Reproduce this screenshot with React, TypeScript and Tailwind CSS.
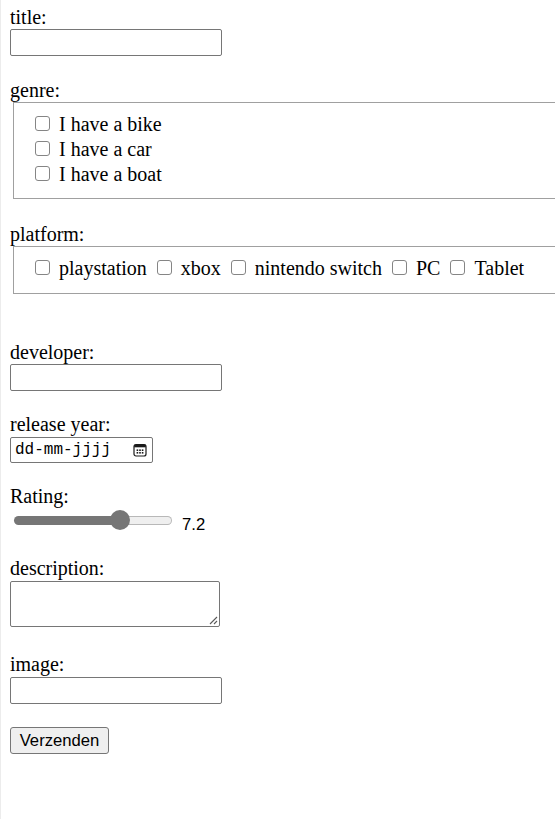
import React from "react";

const label = "h-[23px] leading-[23px] text-[20px] text-black font-['Liberation_Serif','Times_New_Roman',serif]";
const textInput = "w-[212px] h-[27px] border border-[#767676] rounded-[2px] bg-white";

function Box({ className = "" }: { className?: string }) {
  return (
    <span
      className={
        "inline-block w-[15px] h-[15px] shrink-0 border border-[#858585] rounded-[3px] bg-white mt-[4px] " +
        className
      }
    />
  );
}

function CheckRow({ text }: { text: string }) {
  return (
    <div className="flex items-start h-[25px]">
      <Box />
      <span className="ml-[9px] leading-[25px] whitespace-nowrap">{text}</span>
    </div>
  );
}

function CheckItem({ text, first = false }: { text: string; first?: boolean }) {
  return (
    <div className={first ? "flex items-start h-[25px]" : "flex items-start h-[25px] ml-[10px]"}>
      <Box />
      <span className="ml-[9px] leading-[25px] whitespace-nowrap">{text}</span>
    </div>
  );
}

function CalendarIcon() {
  return (
    <svg width="14" height="14" viewBox="0 0 14 14" fill="none">
      <rect x="1" y="1.5" width="12" height="11.5" rx="2" stroke="#1a1a1a" strokeWidth="1.2" />
      <rect x="1.2" y="1.7" width="11.6" height="2.6" fill="#1a1a1a" />
      <rect x="3.6" y="6.4" width="1.6" height="1.6" fill="#1a1a1a" />
      <rect x="6.2" y="6.4" width="1.6" height="1.6" fill="#1a1a1a" />
      <rect x="8.8" y="6.4" width="1.6" height="1.6" fill="#1a1a1a" />
      <rect x="3.6" y="9" width="1.6" height="1.6" fill="#1a1a1a" />
      <rect x="6.2" y="9" width="1.6" height="1.6" fill="#1a1a1a" />
      <rect x="8.8" y="9" width="1.6" height="1.6" fill="#1a1a1a" />
    </svg>
  );
}

export default function App() {
  return (
    <div className="w-[555px] min-h-[819px] overflow-hidden bg-white border-l border-[#ececec] font-['Liberation_Serif','Times_New_Roman',serif] text-[20px] text-black">
      <div className="flex flex-col pl-[9px] pt-[6px]">
        <div className={label}>title:</div>
        <div className={textInput} />

        <div className={label + " mt-[23px]"}>genre:</div>
        <div className="ml-[3px] w-[600px] h-[97px] border border-[#a0a0a0] pl-[21px] pt-[9px] flex flex-col">
          <CheckRow text="I have a bike" />
          <CheckRow text="I have a car" />
          <CheckRow text="I have a boat" />
        </div>

        <div className={label + " mt-[24px]"}>platform:</div>
        <div className="ml-[3px] w-[600px] h-[48px] border border-[#a0a0a0] pl-[21px] pt-[9px] flex">
          <CheckItem text="playstation" first />
          <CheckItem text="xbox" />
          <CheckItem text="nintendo switch" />
          <CheckItem text="PC" />
          <CheckItem text="Tablet" />
        </div>

        <div className={label + " mt-[47px]"}>developer:</div>
        <div className={textInput} />

        <div className={label + " mt-[22px]"}>release year:</div>
        <div className="mt-[1px] w-[143px] h-[26px] border border-[#767676] rounded-[2px] bg-white flex items-center justify-between pl-[4px] pr-[5px]">
          <span className="font-['Liberation_Mono','Courier_New',monospace] text-[16px] leading-[20px] text-black">
            dd-mm-jjjj
          </span>
          <CalendarIcon />
        </div>

        <div className={label + " mt-[22px]"}>Rating:</div>
        <div className="flex items-center h-[24px]">
          <div className="relative ml-[4px] w-[158px] h-[20px] flex items-center">
            <div className="flex w-full h-[9px]">
              <div className="w-[106px] h-full bg-[#767676] rounded-l-full" />
              <div className="flex-1 h-full bg-[#efefef] border border-[#b8b8b8] border-l-0 rounded-r-full" />
            </div>
            <div className="absolute left-[96px] top-0 w-[20px] h-[20px] rounded-full bg-[#767676]" />
          </div>
          <span className="self-start mt-[7px] ml-[10px] leading-[20px] text-[16.67px] font-['Liberation_Sans',Arial,sans-serif]">
            7.2
          </span>
        </div>

        <div className={label + " mt-[25px]"}>description:</div>
        <div className="relative mt-[1px] w-[210px] h-[46px] border border-[#767676] rounded-[2px] bg-white">
          <svg className="absolute right-[1px] bottom-[1px]" width="10" height="10" viewBox="0 0 10 10">
            <line x1="9" y1="2" x2="2" y2="9" stroke="#5a5a5a" strokeWidth="1.1" />
            <line x1="9" y1="6" x2="6" y2="9" stroke="#5a5a5a" strokeWidth="1.1" />
          </svg>
        </div>

        <div className={label + " mt-[26px]"}>image:</div>
        <div className={textInput + " mt-[1px]"} />

        <div className="mt-[23px] w-[99px] h-[27px] border border-[#767676] rounded-[3px] bg-[#efefef] flex items-center justify-center font-['Liberation_Sans',Arial,sans-serif] text-[16.67px] leading-[20px] text-black">
          Verzenden
        </div>
      </div>
    </div>
  );
}
